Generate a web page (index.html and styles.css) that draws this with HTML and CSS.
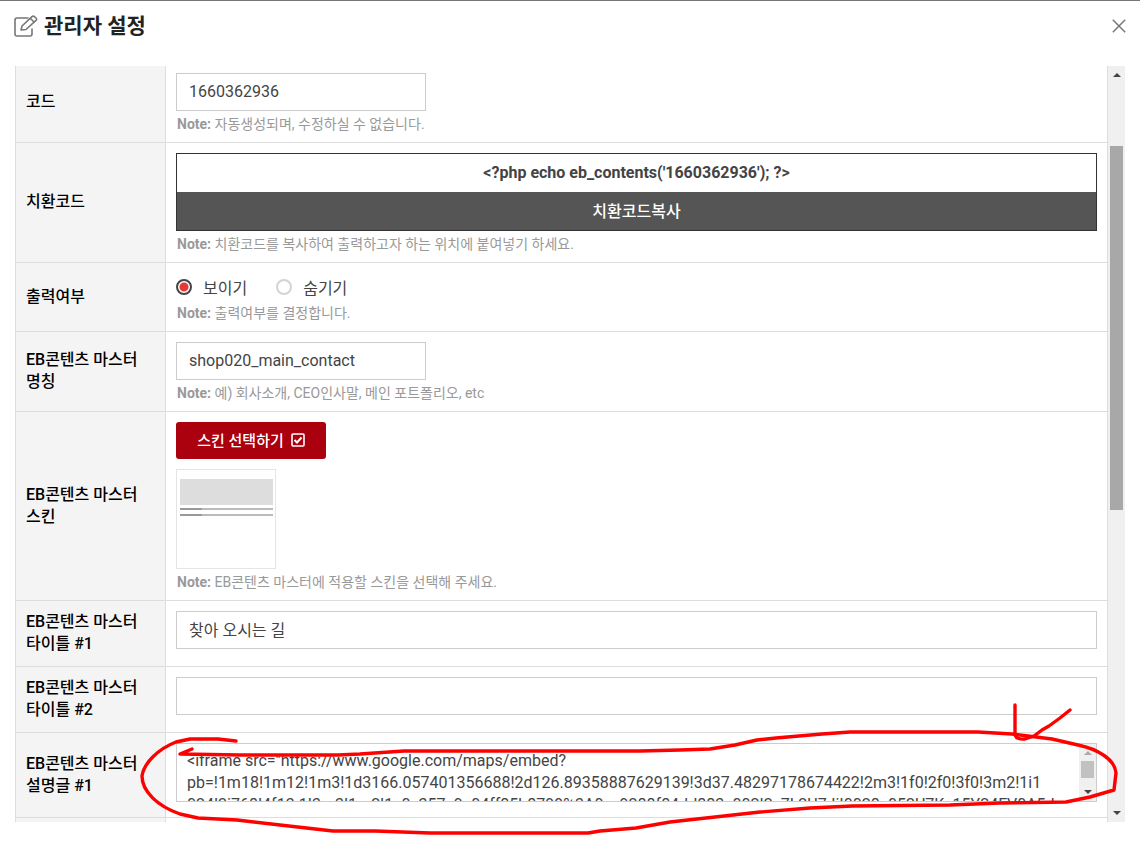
FILE: index.html
```html
<!DOCTYPE html>
<html lang="ko">
<head>
    <meta charset="utf-8">
    <title>관리자 설정</title>
    <link rel="stylesheet" href="styles.css">
</head>
<body>
    <div class="modal">
        <div class="modal-header">
            <h1 class="modal-title">
                <svg class="edit-icon" viewBox="0 0 24 22" width="24" height="22" fill="none" stroke="#777" stroke-width="1.6" stroke-linejoin="round" stroke-linecap="round">
                    <path d="M14 3H3Q1 3 1 5V19Q1 21 3 21H16Q18 21 18 19V14"/>
                    <path d="M7 15L8 11L18 1.6Q19.2 .6 20.4 1.6L22 3Q23.2 4.200 22 5.400L12 14.500Z"/>
                    <path d="M16.500 3.500L20 7"/>
                </svg>
                관리자 설정
            </h1>
            <button type="button" class="close" aria-label="닫기">
                <svg viewBox="0 0 14 14" width="14" height="14" stroke="#777" stroke-width="1.5"><path d="M.8 .8L13.200 13.200M13.200 .8L.8 13.200"/></svg>
            </button>
        </div>

        <div class="modal-body">
            <div class="scroll-area">
                <table class="form-table">
                    <tr>
                        <th scope="row"><label for="code">코드</label></th>
                        <td>
                            <input type="text" id="code" class="input short" value="1660362936">
                            <div class="note"><strong>Note:</strong> 자동생성되며, 수정하실 수 없습니다.</div>
                        </td>
                    </tr>
                    <tr>
                        <th scope="row"><label for="eb_code">치환코드</label></th>
                        <td>
                            <div class="copy-box">
                                <input type="text" id="eb_code" class="copy-code" value="&lt;?php echo eb_contents('1660362936'); ?&gt;">
                                <button type="button" class="copy-btn">치환코드복사</button>
                            </div>
                            <div class="note"><strong>Note:</strong> 치환코드를 복사하여 출력하고자 하는 위치에 붙여넣기 하세요.</div>
                        </td>
                    </tr>
                    <tr>
                        <th scope="row">출력여부</th>
                        <td>
                            <div class="radios">
                                <label class="radio"><input type="radio" name="state" checked>보이기</label>
                                <label class="radio"><input type="radio" name="state">숨기기</label>
                            </div>
                            <div class="note"><strong>Note:</strong> 출력여부를 결정합니다.</div>
                        </td>
                    </tr>
                    <tr>
                        <th scope="row"><label for="name">EB콘텐츠 마스터 명칭</label></th>
                        <td>
                            <input type="text" id="name" class="input short" value="shop020_main_contact">
                            <div class="note"><strong>Note:</strong> 예) 회사소개, CEO인사말, 메인 포트폴리오, etc</div>
                        </td>
                    </tr>
                    <tr>
                        <th scope="row">EB콘텐츠 마스터 스킨</th>
                        <td>
                            <button type="button" class="skin-btn">스킨 선택하기
                                <svg viewBox="0 0 14 14" width="14" height="14" fill="none" stroke="#fff" stroke-width="1.6"><rect x="1" y="1" width="12" height="12" rx="1"/><path d="M3.500 7L6 9.500L10.500 4.500" stroke-width="2"/></svg>
                            </button>
                            <div class="skin-thumb">
                                <div class="thumb-image"></div>
                                <div class="thumb-line"></div>
                                <div class="thumb-line"></div>
                            </div>
                            <div class="note"><strong>Note:</strong> EB콘텐츠 마스터에 적용할 스킨을 선택해 주세요.</div>
                        </td>
                    </tr>
                    <tr>
                        <th scope="row"><label for="title1">EB콘텐츠 마스터 타이틀 #1</label></th>
                        <td><input type="text" id="title1" class="input" value="찾아 오시는 길"></td>
                    </tr>
                    <tr>
                        <th scope="row"><label for="title2">EB콘텐츠 마스터 타이틀 #2</label></th>
                        <td><input type="text" id="title2" class="input" value=""></td>
                    </tr>
                    <tr>
                        <th scope="row"><label for="text1">EB콘텐츠 마스터 설명글 #1</label></th>
                        <td>
                            <div class="textarea-box">
                                <textarea id="text1">&lt;iframe src="https://www.google.com/maps/embed?
pb=!1m18!1m12!1m3!1d3166.057401356688!2d126.89358887629139!3d37.48297178674422!2m3!1f0!2f0!3f0!3m2!1i1
024!2i768!4f13.1!3m3!1m2!1s0x357c9e04ff85b8799%3A0xc9288f84dd883e002!2z7L2U7JiI0028s052U7Ks15Y24FV0A5dx</textarea>
                                <div class="scrollbar small">
                                    <span class="arrow up"></span>
                                    <span class="thumb"></span>
                                    <span class="arrow down"></span>
                                </div>
                            </div>
                        </td>
                    </tr>
                    <tr class="last">
                        <th></th>
                        <td></td>
                    </tr>
                </table>
            </div>
            <div class="scrollbar">
                <span class="arrow up"></span>
                <span class="thumb"></span>
                <span class="arrow down"></span>
            </div>
        </div>

        <svg class="marker" viewBox="0 0 1140 845" width="1140" height="845" fill="none" stroke="#f00" stroke-width="3.4" stroke-linejoin="round" stroke-linecap="round">
            <path d="M236 741L218 739L190 739L176 742C158 749 144 763 142 776C142 791 157 806 180 814L198 818L237 820L280 825L333 831L375 831L430 833H588L600 831L636 828L670 822L760 812L810 808L852 806L950 805L1000 803L1066 802L1090 797L1114 790L1116 773C1115 759 1097 749 1078 745L1052 739L1012 734L978 732H850L822 734L776 738L757 740L735 745L710 749L680 750L640 751H404L360 754L338 755L240 755L180 754L192 749"/>
            <path d="M1015 705V735Q1017 740 1025 739L1034 736L1042 730L1049 726L1060 718L1070 710"/>
        </svg>
    </div>
</body>
</html>
```
FILE: styles.css
```css
*{
    margin: 0;
    padding: 0;
    box-sizing: border-box;
    font-family: Roboto, 'Noto Sans CJK KR', sans-serif;
}
body{
    background: #fff;
    color: #444;
    font-size: 16px;
}
.modal{
    position: relative;
    min-height: 100vh;
    border-top: 1px solid #777;
    overflow: hidden;
}
.modal-header{
    display: flex;
    justify-content: space-between;
    align-items: center;
    height: 50px;
    padding: 0 14px;
}
.modal-title{
    display: flex;
    align-items: center;
    gap: 6px;
    color: #222;
    font-size: 21px;
    line-height: 30px;
}
.close{
    display: flex;
    border: 0;
    background: none;
}
.modal-body{
    display: flex;
    padding: 15px;
}
.scroll-area{
    flex: 1;
    min-width: 0;
}

.form-table{
    width: 100%;
    border-collapse: collapse;
    table-layout: fixed;
}
.form-table th,
.form-table td{
    border: 1px solid #ddd;
    padding: 10px;
}
.form-table th{
    width: 150px;
    padding-bottom: 11px;
    background: #f4f4f4;
    color: #000;
    font-weight: 500;
    line-height: 22px;
    text-align: left;
    word-break: keep-all;
}
.form-table td{
    vertical-align: top;
}
.form-table tr:first-child th,
.form-table tr:first-child td{
    border-top: 0;
    padding-top: 7px;
}
.form-table tr.last th,
.form-table tr.last td{
    border-bottom: 0;
    padding: 2px;
}

.input{
    display: block;
    width: 100%;
    height: 38px;
    padding: 0 12px 2px;
    border: 1px solid #ccc;
    background: #fff;
    color: #444;
    font-size: 16px;
}
.input.short{
    width: 250px;
}
.note{
    margin-top: 5px;
    padding-left: 1px;
    color: #999;
    font-size: 14px;
    line-height: 16px;
}

.copy-box{
    border: 1px solid #333;
}
.copy-code,
.copy-btn{
    display: block;
    width: 100%;
    height: 38px;
    padding-bottom: 2px;
    border: 0;
    text-align: center;
    font-size: 16px;
    font-weight: 500;
}
.copy-code{
    color: #444;
    font-weight: 700;
}
.copy-btn{
    background: #555;
    color: #fff;
}

.radios{
    display: flex;
    gap: 29px;
    height: 27px;
}
.radio{
    display: flex;
    align-items: center;
    gap: 11px;
}
.radio input{
    appearance: none;
    width: 16px;
    height: 16px;
    border: 2px solid #d4d4d4;
    border-radius: 50%;
}
.radio input:checked{
    border-color: #444;
    background: radial-gradient(circle, #e53935 4px, #fff 5px);
}

.skin-btn{
    display: flex;
    align-items: center;
    justify-content: center;
    gap: 7px;
    width: 150px;
    height: 37px;
    padding-bottom: 2px;
    border: 0;
    border-radius: 3px;
    background: #ab000d;
    color: #fff;
    font-size: 15px;
    font-weight: 500;
}
.skin-thumb{
    width: 100px;
    height: 100px;
    margin-top: 10px;
    padding: 9px 2px 0 3px;
    border: 1px solid #e5e5e5;
}
.thumb-image{
    height: 26px;
    margin-bottom: 3px;
    background: #ddd;
}
.thumb-line{
    height: 2px;
    margin-bottom: 4px;
    background: linear-gradient(to right, #999 22px, #bbb 22px);
}

.textarea-box{
    display: flex;
    height: 59px;
    margin-bottom: 5px;
    border: 1px solid #ccc;
}
.textarea-box textarea{
    flex: 1;
    min-width: 0;
    padding: 6px 10px 0;
    border: 0;
    resize: none;
    overflow: hidden;
    white-space: pre;
    color: #444;
    font-size: 16px;
    line-height: 22px;
}

.scrollbar{
    display: flex;
    flex-direction: column;
    align-items: center;
    width: 17px;
    padding: 7px 0;
    background: #f0f0f0;
}
.arrow{
    border: 4px solid transparent;
}
.arrow.up{
    border-top: 0;
    border-bottom-color: #444;
}
.arrow.down{
    margin-top: auto;
    border-bottom: 0;
    border-top-color: #444;
}
.thumb{
    width: 13px;
    height: 364px;
    margin-top: 69px;
    background: #a8a8a8;
}
.scrollbar.small .arrow.up{
    border-bottom-color: #aaa;
}
.scrollbar.small .thumb{
    height: 17px;
    margin-top: 6px;
    background: #c1c1c1;
}

.marker{
    position: absolute;
    top: -1px;
    left: 0;
    pointer-events: none;
}
```
